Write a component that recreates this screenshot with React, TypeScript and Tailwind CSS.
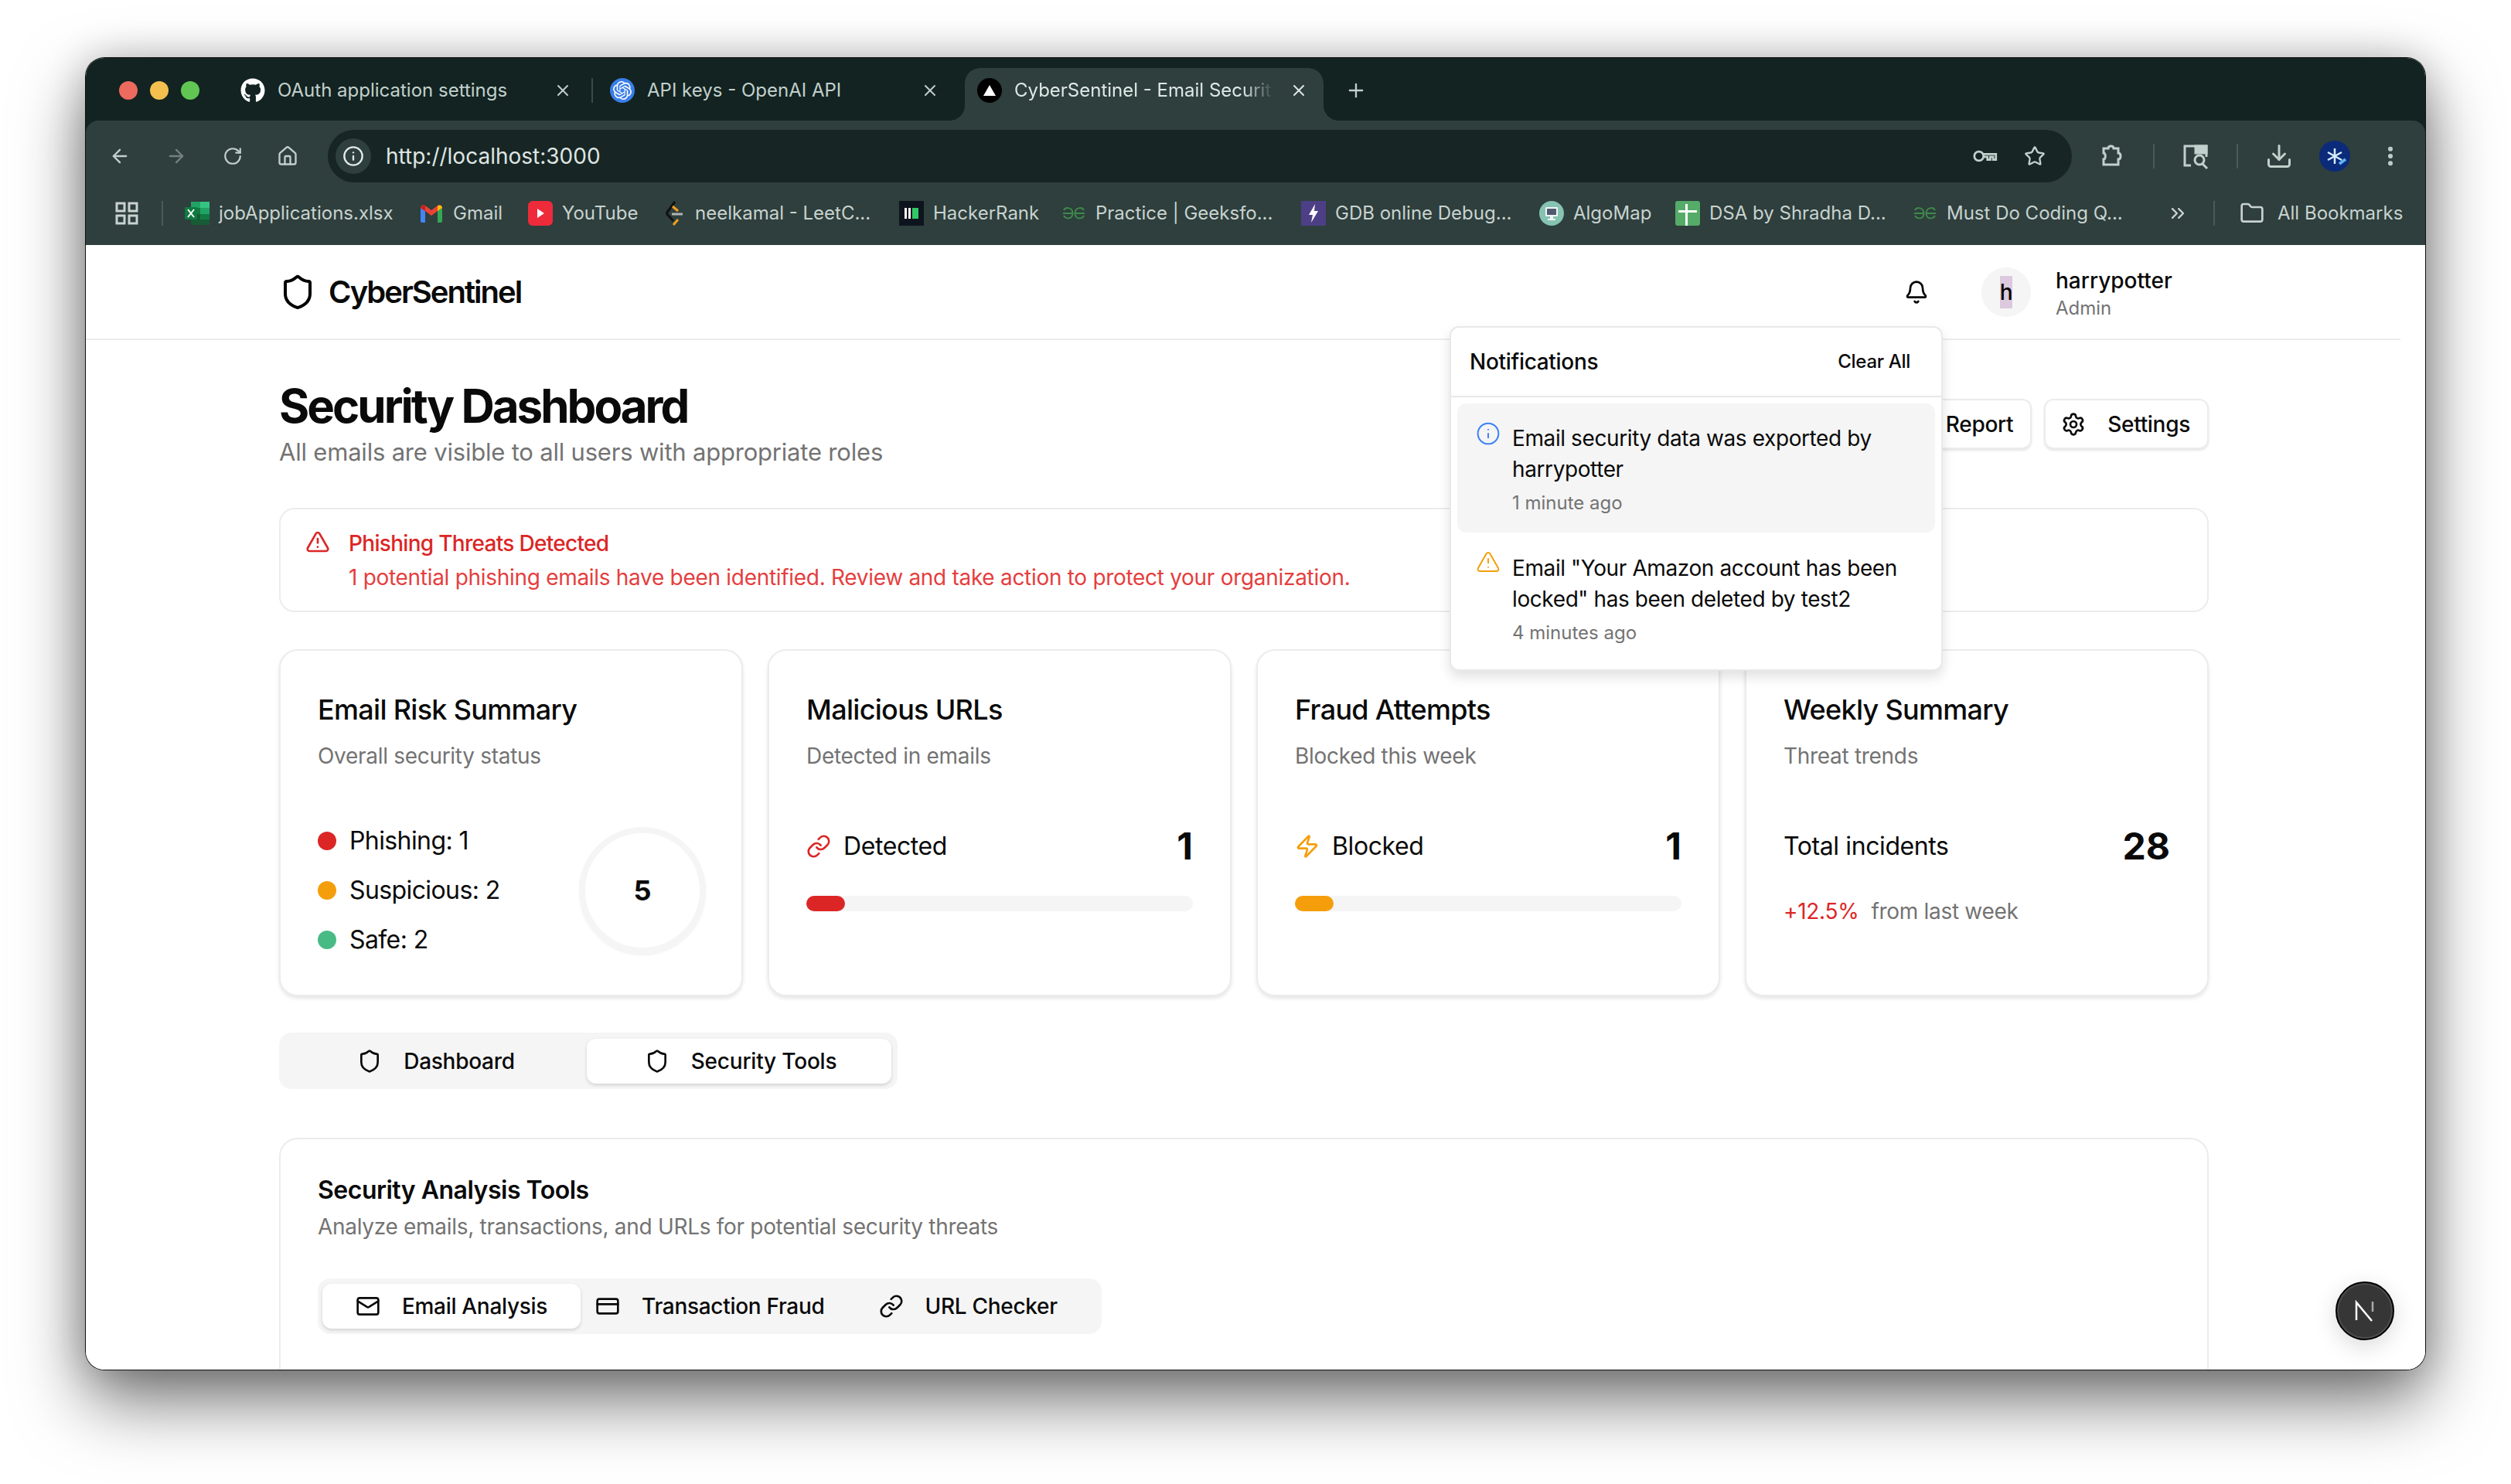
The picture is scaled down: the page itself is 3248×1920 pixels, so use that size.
import {
  ArrowLeft,
  ArrowRight,
  Bell,
  ChevronsRight,
  CreditCard,
  Download,
  Folder,
  House,
  Info,
  Link,
  Mail,
  MoreVertical,
  Plus,
  RotateCw,
  Settings,
  Shield,
  Star,
  TriangleAlert,
  X,
  Zap,
} from "lucide-react";
import { FaGithub } from "react-icons/fa";
import { SiOpenai } from "react-icons/si";
import type { ReactNode } from "react";

// --- browser chrome favicons ---

function ExcelIcon() {
  return (
    <svg viewBox="0 0 32 32" className="h-8 w-8 shrink-0">
      <rect x="8" y="1" width="12" height="8" fill="#21a366" />
      <rect x="20" y="1" width="12" height="8" fill="#33c481" />
      <rect x="8" y="9" width="12" height="8" fill="#107c41" />
      <rect x="20" y="9" width="12" height="8" fill="#21a366" />
      <rect x="8" y="17" width="12" height="7" fill="#185c37" />
      <rect x="20" y="17" width="12" height="7" fill="#107c41" />
      <rect x="8" y="24" width="24" height="7" fill="#185c37" />
      <rect x="0" y="8" width="16" height="16" rx="1" fill="#0f7a41" />
      <path d="M4 11l8 10M12 11l-8 10" stroke="#fff" strokeWidth="2" />
    </svg>
  );
}

function GmailIcon() {
  return (
    <svg viewBox="0 0 32 32" className="h-8 w-8 shrink-0">
      <path d="M2 28V9l6 4v15H4a2 2 0 0 1-2-2z" fill="#4285f4" />
      <path d="M24 28V13l6-4v17a2 2 0 0 1-2 2z" fill="#34a853" />
      <path d="M2 9c0-3 3-5 6-3l8 6 8-6c3-2 6 0 6 3l-6 4-8 6-8-6z" fill="#ea4335" />
      <path d="M24 6.2c3-2 6 0 6 2.8l-6 4z" fill="#fbbc04" />
      <path d="M2 9c0-2.800 3-4.800 6-2.800V13z" fill="#c5221f" />
    </svg>
  );
}

function YoutubeIcon() {
  return (
    <svg viewBox="0 0 32 32" className="h-8 w-8 shrink-0">
      <rect x="0" y="0" width="32" height="32" rx="6" fill="#ee2b3b" />
      <path d="M12 10l9 6-9 6z" fill="#fff" />
    </svg>
  );
}

function LeetcodeIcon() {
  return (
    <svg viewBox="0 0 32 32" className="h-8 w-8 shrink-0" fill="none" strokeWidth="3">
      <path d="M18 1L7 16" stroke="#111" />
      <path d="M7 16l9 10" stroke="#111" />
      <path d="M16 31l6-7" stroke="#f0a01f" />
      <path d="M15 7l7 6" stroke="#f0a01f" />
      <path d="M14 17h14" stroke="#b3b3b3" />
    </svg>
  );
}

function HackerRankIcon() {
  return (
    <span className="flex h-8 w-8 shrink-0 items-center justify-center bg-[#0e141e]">
      <span className="h-[14px] w-2 border-x-[3px] border-white" />
      <span className="ml-[2px] h-[14px] w-2 bg-[#32c766]" />
    </span>
  );
}

function GfgIcon() {
  return (
    <svg viewBox="0 0 32 20" className="h-5 w-8 shrink-0" fill="none" stroke="#3f8a4b" strokeWidth="2">
      <path d="M3 6c2-4 9-4 11 1 1 3 1 4 0 6-2 5-9 4-11 0" />
      <path d="M29 6c-2-4-9-4-11 1-1 3-1 4 0 6 2 5 9 4 11 0" />
      <path d="M2 10h12M18 10h12" />
    </svg>
  );
}

function GdbIcon() {
  return (
    <span className="flex h-8 w-8 shrink-0 items-center justify-center bg-[#4d3f86]">
      <svg viewBox="0 0 16 24" className="h-6 w-4">
        <path d="M10 0L2 14h5l-2 10 9-15H9z" fill="#fff" />
      </svg>
    </span>
  );
}

function AlgoIcon() {
  return (
    <span className="flex h-8 w-8 shrink-0 items-center justify-center rounded-full bg-[#86c3b1]">
      <svg viewBox="0 0 20 20" className="h-5 w-5">
        <rect x="2" y="2" width="16" height="12" rx="1" fill="#f1f5f4" />
        <rect x="4" y="4" width="12" height="8" fill="#4f5a72" />
        <path d="M8 14h4v3H8zM5 17h10v2H5z" fill="#f1f5f4" />
      </svg>
    </span>
  );
}

function SheetIcon() {
  return (
    <span className="relative h-8 w-8 shrink-0 rounded-[3px] bg-[#55ab68]">
      <span className="absolute bottom-0 left-[13px] top-[4px] w-[3px] bg-white" />
      <span className="absolute left-[4px] right-[4px] top-[12px] h-[3px] bg-white" />
    </span>
  );
}

const BOOKMARKS: { label: string; icon: ReactNode; width: string }[] = [
  { label: "jobApplications.xlsx", icon: <ExcelIcon />, width: "w-[303px]" },
  { label: "Gmail", icon: <GmailIcon />, width: "w-[141px]" },
  { label: "YouTube", icon: <YoutubeIcon />, width: "w-[172px]" },
  { label: "neelkamal - LeetC...", icon: <LeetcodeIcon />, width: "w-[308px]" },
  { label: "HackerRank", icon: <HackerRankIcon />, width: "w-[210px]" },
  { label: "Practice | Geeksfo...", icon: <GfgIcon />, width: "w-[310px]" },
  { label: "GDB online Debug...", icon: <GdbIcon />, width: "w-[308px]" },
  { label: "AlgoMap", icon: <AlgoIcon />, width: "w-[176px]" },
  { label: "DSA by Shradha D...", icon: <SheetIcon />, width: "w-[307px]" },
  { label: "Must Do Coding Q...", icon: <GfgIcon />, width: "w-[329px]" },
];

function TrafficLights() {
  return (
    <div className="flex w-[200px] shrink-0 gap-4 self-start pl-[43px] pt-[30px]">
      <span className="h-6 w-6 rounded-full bg-[#ec6a5e]" />
      <span className="h-6 w-6 rounded-full bg-[#f4bf4f]" />
      <span className="h-6 w-6 rounded-full bg-[#61c554]" />
    </div>
  );
}

function BrowserChrome() {
  return (
    <div className="shrink-0 bg-[#122321] font-[Inter,sans-serif] text-[24px] tracking-normal text-[#c2d0cc]">
      {/* tab strip */}
      <div className="flex h-[81px] items-end">
        <TrafficLights />
        <div className="flex h-[68px] items-start">
          <div className="flex h-[58px] w-[478px] items-center pr-[22px]">
            <FaGithub className="h-8 w-8 shrink-0 text-white" />
            <span className="ml-4 flex-1 truncate">OAuth application settings</span>
            <X className="h-6 w-6" strokeWidth={2} />
            <span className="ml-[25px] h-8 w-[2px] shrink-0 bg-[#3a4a48]" />
          </div>
          <div className="flex h-[58px] w-[459px] items-center pr-[33px]">
            <span className="flex h-8 w-8 shrink-0 items-center justify-center rounded-full bg-[#3b7ee8]">
              <SiOpenai className="h-6 w-6 text-white" />
            </span>
            <span className="ml-4 flex-1 truncate">API keys - OpenAI API</span>
            <X className="h-6 w-6" strokeWidth={2} />
          </div>
          <div className="relative flex h-[68px] w-[464px] items-start rounded-t-[20px] bg-[#2e3f3d] pl-4 pr-5 text-[#dfe8e5]">
            <span className="absolute bottom-0 right-full h-5 w-5 bg-[radial-gradient(circle_at_0_0,transparent_20px,#2e3f3d_20px)]" />
            <span className="absolute bottom-0 left-full h-5 w-5 bg-[radial-gradient(circle_at_100%_0,transparent_20px,#2e3f3d_20px)]" />
            <div className="flex h-[58px] w-full items-center">
              <span className="flex h-8 w-8 shrink-0 items-center justify-center rounded-full bg-black">
                <span className="h-0 w-0 border-x-[8px] border-b-[14px] border-x-transparent border-b-white" />
              </span>
              <span className="ml-4 flex-1 overflow-hidden whitespace-nowrap [mask-image:linear-gradient(to_right,black_88%,transparent)]">
                CyberSentinel - Email Security
              </span>
              <X className="ml-5 h-6 w-6 shrink-0" strokeWidth={2} />
            </div>
          </div>
          <div className="flex h-[58px] items-center pl-7">
            <Plus className="h-7 w-7" strokeWidth={2} />
          </div>
        </div>
      </div>
      {/* toolbar */}
      <div className="flex h-[80px] items-center rounded-t-[16px] bg-[#2e3f3d] pl-[30px] pt-[12px]">
        <ArrowLeft className="h-7 w-7 shrink-0" strokeWidth={2} />
        <ArrowRight className="ml-[45px] h-7 w-7 shrink-0 text-[#72817e]" strokeWidth={2} />
        <RotateCw className="ml-[46px] h-[26px] w-[26px] shrink-0" strokeWidth={2} />
        <House className="ml-[44px] h-7 w-7 shrink-0" strokeWidth={2} />
        <div className="ml-[38px] flex h-[68px] w-[2256px] shrink-0 items-center rounded-full bg-[#172624] pl-[10px] pr-[34px]">
          <span className="flex h-[46px] w-[46px] items-center justify-center rounded-full bg-[#2e3f3d]">
            <Info className="h-7 w-7 text-[#e3e9e7]" strokeWidth={2} />
          </span>
          <span className="ml-[19px] flex-1 text-[28px] text-[#dfe5e3]">http://localhost:3000</span>
          <svg viewBox="0 0 36 24" className="h-[22px] w-9" fill="none" stroke="#c2d0cc" strokeWidth="3">
            <circle cx="9" cy="12" r="6.500" />
            <path d="M15 9h18v8h-4v-4h-4v4h-4v-4h-6" />
          </svg>
          <Star className="ml-8 h-7 w-7" strokeWidth={2} />
        </div>
        <svg viewBox="0 0 28 32" className="ml-[38px] h-8 w-7 shrink-0" fill="none" stroke="#c2d0cc" strokeWidth="3">
          <path d="M3 6h6c0-4 7-4 7 0h6v6c4 0 4 8 0 8v7H3v-7c3 0 3-8 0-8z" />
        </svg>
        <span className="ml-[39px] h-8 w-[2px] shrink-0 bg-[#4a5a58]" />
        <svg viewBox="0 0 36 36" className="ml-[35px] h-9 w-9 shrink-0" fill="none" stroke="#c2d0cc" strokeWidth="3">
          <path d="M12 30H4V5h28v14" />
          <rect x="18" y="5" width="14" height="9" fill="#c2d0cc" />
          <circle cx="23" cy="23" r="6" />
          <path d="M27 28l6 6" />
        </svg>
        <span className="ml-[35px] h-8 w-[2px] shrink-0 bg-[#4a5a58]" />
        <Download className="ml-[35px] h-9 w-9 shrink-0" strokeWidth={2} />
        <svg viewBox="0 0 40 40" className="ml-[34px] h-10 w-10 shrink-0" fill="none" stroke="#d6ecff" strokeWidth="2.500">
          <circle cx="20" cy="20" r="20" fill="#0b2a7a" stroke="none" />
          <path d="M20 10v20M11 15l18 10M29 15l-18 10" />
          <path d="M26 30l8-6" stroke="#5fb4f0" strokeWidth="4" />
        </svg>
        <MoreVertical className="ml-[36px] h-8 w-8 shrink-0" strokeWidth={2.500} />
      </div>
      {/* bookmarks */}
      <div className="flex h-[81px] items-center bg-[#2e3f3d] pb-[2px] pl-[37px] text-[#c8d2cf]">
        <svg viewBox="0 0 32 32" className="h-8 w-8 shrink-0" fill="none" stroke="#c8d2cf" strokeWidth="3">
          <rect x="3" y="3" width="10" height="10" />
          <rect x="19" y="3" width="10" height="10" />
          <rect x="3" y="19" width="10" height="10" />
          <rect x="19" y="19" width="10" height="10" />
        </svg>
        <span className="ml-[29px] h-8 w-[2px] shrink-0 bg-[#4a5a58]" />
        <div className="ml-[28px] flex shrink-0 items-center">
          {BOOKMARKS.map((b) => (
            <div key={b.label} className={`flex shrink-0 items-center gap-[12px] ${b.width}`}>
              <span className="flex h-8 w-8 shrink-0 items-center justify-center">{b.icon}</span>
              <span className="whitespace-nowrap">{b.label}</span>
            </div>
          ))}
        </div>
        <ChevronsRight className="h-7 w-7 shrink-0" strokeWidth={2} />
        <span className="ml-[32px] h-8 w-[2px] shrink-0 bg-[#4a5a58]" />
        <Folder className="ml-[32px] h-8 w-8 shrink-0" strokeWidth={2} />
        <span className="ml-[17px] whitespace-nowrap">All Bookmarks</span>
      </div>
    </div>
  );
}

// --- page ---

function NotificationPanel() {
  return (
    <div className="absolute left-[1764px] top-[105px] z-10 h-[446px] w-[638px] rounded-[12px] border-2 border-[#e9e9e9] bg-white shadow-[0_8px_16px_rgba(0,0,0,0.12)]">
      <div className="flex h-[90px] items-center justify-between border-b-2 border-[#e9e9e9] pl-6 pr-10">
        <span className="text-[28px] font-medium text-[#0a0a0a]">Notifications</span>
        <span className="text-[24px] font-medium text-[#0a0a0a]">Clear All</span>
      </div>
      <div className="px-2 pt-2">
        <div className="flex h-[167px] gap-[15px] rounded-[12px] bg-[#f5f5f5] pl-[24px] pr-4 pt-[25px]">
          <Info className="mt-[-2px] h-8 w-8 shrink-0 text-[#3b82f6]" strokeWidth={1.500} />
          <div className="tracking-[-0.400px]">
            <p className="text-[28px] leading-[40px] text-[#0a0a0a]">Email security data was exported by harrypotter</p>
            <p className="mt-[8px] text-[24px] leading-[32px] tracking-normal text-[#737373]">1 minute ago</p>
          </div>
        </div>
        <div className="flex gap-[15px] pl-[24px] pr-4 pt-[26px]">
          <TriangleAlert className="mt-[-4px] h-8 w-8 shrink-0 text-[#f59e0b]" strokeWidth={1.500} />
          <div className="tracking-[-0.400px]">
            <p className="text-[28px] leading-[40px] text-[#0a0a0a]">
              Email "Your Amazon account has been locked" has been deleted by test2
            </p>
            <p className="mt-[8px] text-[24px] leading-[32px] tracking-normal text-[#737373]">4 minutes ago</p>
          </div>
        </div>
      </div>
    </div>
  );
}

function Header() {
  return (
    <header className="flex h-[123px] w-[2994px] items-center justify-between border-b-2 border-[#ececec] pl-[250px] pr-[296px] pt-[1px]">
      <div className="flex items-center gap-[16px]">
        <Shield className="h-12 w-12" strokeWidth={2} />
        <span className="text-[40px] font-semibold tracking-[-2px] text-[#0a0a0a]">CyberSentinel</span>
      </div>
      <div className="flex items-center">
        <Bell className="h-8 w-8" strokeWidth={2} />
        <span className="ml-[68px] flex h-16 w-16 items-center justify-center rounded-full bg-[#f5f5f5] text-[28px] font-medium">
          <span className="bg-[#dcc9de]">h</span>
        </span>
        <div className="ml-[32px] w-[150px] pt-[5px]">
          <p className="text-[28px] font-medium leading-[36px] tracking-normal text-[#0a0a0a]">harrypotter</p>
          <p className="text-[24px] leading-[36px] tracking-normal text-[#737373]">Admin</p>
        </div>
      </div>
    </header>
  );
}

function Card({ title, sub, children }: { title: string; sub: string; children: ReactNode }) {
  return (
    <div className="h-[449px] rounded-[24px] border-2 border-[#ececec] bg-white px-12 pt-[56px] shadow-[0_3px_5px_rgba(0,0,0,0.1)]">
      <h3 className="text-[36px] font-medium leading-[40px] tracking-[-0.700px] text-[#0a0a0a]">{title}</h3>
      <p className="mt-[20px] text-[28px] leading-[40px] text-[#737373]">{sub}</p>
      {children}
    </div>
  );
}

function LegendRow({ dot, label }: { dot: string; label: string }) {
  return (
    <div className="flex h-16 items-center gap-[17px] text-[32px] tracking-[-0.600px] text-[#0a0a0a]">
      <span className={`h-6 w-6 rounded-full ${dot}`} />
      {label}
    </div>
  );
}

function StatBody({ icon, label, value, bar }: { icon: ReactNode; label: string; value: string; bar: string }) {
  return (
    <div className="mt-[73px]">
      <div className="flex h-12 items-center justify-between">
        <div className="flex items-center gap-4 text-[32px] tracking-[-0.400px] text-[#0a0a0a]">
          {icon}
          {label}
        </div>
        <span className="text-[48px] font-bold tracking-normal text-[#0a0a0a]">{value}</span>
      </div>
      <div className="mt-[40px] h-5 w-full rounded-full bg-[#f5f5f5]">
        <div className={`h-5 w-[50px] rounded-full ${bar}`} />
      </div>
    </div>
  );
}

function Button({ icon, label }: { icon: ReactNode; label: string }) {
  return (
    <div className="flex h-[65px] items-center gap-[28px] rounded-[12px] border-2 border-[#ececec] bg-white pl-[20px] pr-[22px] text-[28px] font-medium text-[#0a0a0a] shadow-[0_2px_3px_rgba(0,0,0,0.1)]">
      {icon}
      {label}
    </div>
  );
}

function Dashboard() {
  return (
    <main className="ml-[250px] w-[2496px]">
      {/* title row */}
      <div className="flex h-[217px] items-start justify-between pt-[47px]">
        <div>
          <h1 className="text-[60px] font-bold leading-[76px] tracking-[-3px] text-[#0a0a0a]">Security Dashboard</h1>
          <p className="mt-[2px] text-[31px] leading-[40px] tracking-[-0.200px] text-[#737373]">
            All emails are visible to all users with appropriate roles
          </p>
        </div>
        <div className="mt-[29px] flex gap-4">
          <Button icon={<Download className="h-8 w-8" strokeWidth={2} />} label="Export Report" />
          <Button icon={<Settings className="h-8 w-8" strokeWidth={2} />} label="Settings" />
        </div>
      </div>

      {/* alert */}
      <div className="flex h-[135px] items-start gap-[24px] rounded-[20px] border-2 border-[#ececec] pl-[32px] pr-[30px] pt-[22px] text-[#dc2626]">
        <TriangleAlert className="mt-1 h-8 w-8 shrink-0" strokeWidth={2} />
        <div className="text-[28px] leading-[44px]">
          <p className="font-medium tracking-[-0.700px]">Phishing Threats Detected</p>
          <p className="text-[#e53e3e]">
            1 potential phishing emails have been identified. Review and take action to protect your organization.
          </p>
        </div>
      </div>

      {/* stat cards */}
      <div className="mt-[48px] grid grid-cols-4 gap-8">
        <Card title="Email Risk Summary" sub="Overall security status">
          <div className="mt-[58px] flex items-center justify-between">
            <div>
              <LegendRow dot="bg-[#dc2626]" label="Phishing: 1" />
              <LegendRow dot="bg-[#f59e0b]" label="Suspicious: 2" />
              <LegendRow dot="bg-[#48bb85]" label="Safe: 2" />
            </div>
            <div className="-mr-[2px] flex h-[164px] w-[164px] items-center justify-center rounded-full border-[8px] border-[#f5f5f5] text-[36px] font-bold tracking-normal text-[#0a0a0a] shadow-[0_2px_3px_rgba(0,0,0,0.06)]">
              5
            </div>
          </div>
        </Card>
        <Card title="Malicious URLs" sub="Detected in emails">
          <StatBody
            icon={<Link className="h-8 w-8 text-[#dc2626]" strokeWidth={2} />}
            label="Detected"
            value="1"
            bar="bg-[#dc2626]"
          />
        </Card>
        <Card title="Fraud Attempts" sub="Blocked this week">
          <StatBody
            icon={<Zap className="h-8 w-8 text-[#f59e0b]" strokeWidth={2} />}
            label="Blocked"
            value="1"
            bar="bg-[#f59e0b]"
          />
        </Card>
        <Card title="Weekly Summary" sub="Threat trends">
          <div className="mt-[73px]">
            <div className="flex h-12 items-center justify-between">
              <span className="text-[32px] tracking-[-0.400px] text-[#0a0a0a]">Total incidents</span>
              <span className="text-[48px] font-bold tracking-normal text-[#0a0a0a]">28</span>
            </div>
            <p className="mt-[40px] text-[28px] leading-[40px] text-[#737373]">
              <span className="mr-4 text-[#dc2626]">+12.5%</span>from last week
            </p>
          </div>
        </Card>
      </div>

      {/* tabs */}
      <div className="mt-[47px] flex h-[73px] w-[800px] items-center rounded-[16px] bg-[#f5f5f5] px-2">
        <div className="flex h-[58px] w-[392px] items-center justify-center gap-[28px] text-[28px] font-medium text-[#0a0a0a]">
          <Shield className="h-8 w-8" strokeWidth={2} />
          Dashboard
        </div>
        <div className="flex h-[58px] w-[396px] items-center justify-center gap-[28px] rounded-[12px] bg-white pl-[4px] text-[28px] font-medium tracking-[-0.200px] text-[#0a0a0a] shadow-[0_2px_4px_rgba(0,0,0,0.15)]">
          <Shield className="h-8 w-8" strokeWidth={2} />
          Security Tools
        </div>
      </div>

      {/* tools card */}
      <section className="mt-[63px] h-[340px] rounded-t-[24px] border-x-2 border-t-2 border-[#ececec] px-12 pt-[46px]">
        <h2 className="text-[32px] font-semibold leading-[40px] tracking-[-0.500px] text-[#0a0a0a]">Security Analysis Tools</h2>
        <p className="mt-[7px] text-[28px] leading-[40px] text-[#737373]">Analyze emails, transactions, and URLs for potential security threats</p>
        <div className="mt-[47px] flex h-[72px] w-[1014px] items-center rounded-[16px] bg-[#f5f5f5] pl-[6px] text-[28px] font-medium text-[#0a0a0a]">
          <div className="flex h-[58px] w-[334px] items-center justify-center gap-[28px] rounded-[12px] bg-white shadow-[0_2px_4px_rgba(0,0,0,0.15)]">
            <Mail className="h-8 w-8" strokeWidth={2} />
            Email Analysis
          </div>
          <div className="flex items-center gap-[28px] pl-[19px]">
            <CreditCard className="h-8 w-8" strokeWidth={2} />
            Transaction Fraud
          </div>
          <div className="ml-[70px] flex items-center gap-[28px]">
            <Link className="h-8 w-8" strokeWidth={2} />
            URL Checker
          </div>
        </div>
      </section>
    </main>
  );
}

export default function App() {
  return (
    <div className="h-[1920px] w-[3248px] overflow-hidden bg-white pl-[111px] pt-[75px] font-[Inter,sans-serif] tracking-[-0.300px]">
      <div className="relative flex h-[1697px] w-[3026px] flex-col overflow-hidden rounded-[24px] bg-white shadow-[0_0_0_1px_#111,0_40px_90px_rgba(0,0,0,0.55),0_0_50px_rgba(0,0,0,0.2)]">
        <BrowserChrome />
        <div className="relative flex-1 overflow-hidden bg-white">
          <Header />
          <Dashboard />
          <NotificationPanel />
          <div className="absolute bottom-[38px] right-[40px] flex h-[76px] w-[76px] items-center justify-center rounded-full border-2 border-black bg-[#363636] shadow-[0_8px_30px_rgba(0,0,0,0.15),inset_0_0_0_2px_#4d4d4d]">
            <svg viewBox="0 0 28 28" className="h-7 w-7" fill="none" stroke="#fff" strokeWidth="2.500">
              <path d="M3 26V3l20 24" />
              <path d="M24 2v13" stroke="#aaa" />
            </svg>
          </div>
        </div>
      </div>
    </div>
  );
}
